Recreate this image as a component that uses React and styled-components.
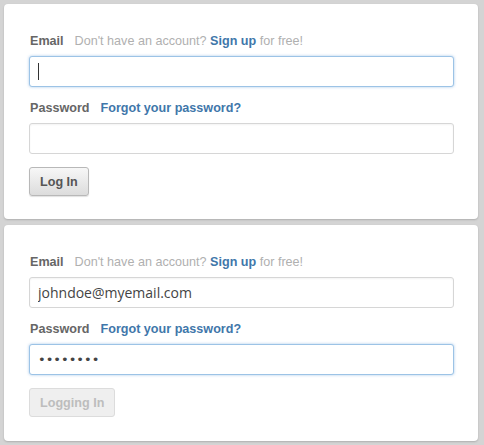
import styled, { createGlobalStyle } from "styled-components";

const Global = createGlobalStyle`
  html, body {
    margin: 0;
    padding: 0;
    background: #d4d4d4;
  }
  body {
    font-family: "Liberation Sans", Arial, sans-serif;
  }
`;

export default function App() {
  return (
    <>
      <Global />
      <Page>
        <LoginCard top={30} bottom={23}>
          <LabelRow>
            <Label>Email</Label>
            <Hint>
              Don't have an account? <Link>Sign up</Link> for free!
            </Hint>
          </LabelRow>
          <Field>
            <TextInput focused defaultValue="" />
            <Caret />
          </Field>
          <LabelRow>
            <Label>Password</Label>
            <Link>Forgot your password?</Link>
          </LabelRow>
          <Field>
            <TextInput type="password" defaultValue="" />
          </Field>
          <Button>Log In</Button>
        </LoginCard>

        <LoginCard top={30} bottom={24}>
          <LabelRow>
            <Label>Email</Label>
            <Hint>
              Don't have an account? <Link>Sign up</Link> for free!
            </Hint>
          </LabelRow>
          <Field>
            <TextInput defaultValue="johndoe@myemail.com" />
          </Field>
          <LabelRow>
            <Label>Password</Label>
            <Link>Forgot your password?</Link>
          </LabelRow>
          <Field>
            <TextInput focused type="password" defaultValue="password" />
          </Field>
          <Button disabled>Logging In</Button>
        </LoginCard>
      </Page>
    </>
  );
}

const Page = styled.div`
  width: 484px;
  height: 445px;
  padding: 4px 6px 0 4px;
  box-sizing: border-box;
  display: flex;
  flex-direction: column;
  gap: 6px;
`;

const LoginCard = styled.div`
  background: #fff;
  border-radius: 4px;
  box-shadow: 0 1px 2px rgba(0, 0, 0, 0.18);
  padding: ${(p) => p.top}px 24px ${(p) => p.bottom}px 25px;
  display: flex;
  flex-direction: column;
  align-items: flex-start;
`;

const LabelRow = styled.div`
  display: flex;
  align-items: baseline;
  gap: 11px;
  height: 15px;
  line-height: 15px;
  font-size: 12.6px;
  margin-bottom: 7px;
  padding-left: 1px;
`;

const Label = styled.span`
  font-weight: bold;
  color: #666;
`;

const Hint = styled.span`
  color: #b0b0b0;
`;

const Link = styled.span`
  font-weight: bold;
  color: #3f77aa;
`;

const Field = styled.div`
  position: relative;
  width: 100%;
  margin-bottom: 14px;
`;

const TextInput = styled.input`
  width: 100%;
  height: 31px;
  box-sizing: border-box;
  padding: 0 8px;
  border-radius: 3px;
  outline: none;
  font-family: ${(p) =>
    p.type === "password" ? '"DejaVu Sans", sans-serif' : '"Open Sans", sans-serif'};
  font-size: ${(p) => (p.type === "password" ? "13px" : "14px")};
  color: #444;
  background: #fff;
  border: 1px solid ${(p) => (p.focused ? "#9cc3e6" : "#d6d6d6")};
  box-shadow: ${(p) =>
    p.focused
      ? "0 0 3px rgba(110, 165, 220, 0.6)"
      : "inset 0 1px 2px rgba(0, 0, 0, 0.05)"};
`;

const Caret = styled.span`
  position: absolute;
  left: 9px;
  top: 7px;
  width: 1px;
  height: 17px;
  background: #333;
`;

const Button = styled.button`
  margin-top: -1px;
  height: 29px;
  padding: 0 10px;
  border-radius: 3px;
  font-family: "Liberation Sans", Arial, sans-serif;
  font-size: 12.6px;
  font-weight: bold;
  color: ${(p) => (p.disabled ? "#bdbdbd" : "#555")};
  border: 1px solid ${(p) => (p.disabled ? "#dcdcdc" : "#b8b8b8")};
  background: ${(p) =>
    p.disabled ? "#efefef" : "linear-gradient(#f7f7f7, #dcdcdc)"};
  box-shadow: ${(p) => (p.disabled ? "none" : "0 1px 1px rgba(0,0,0,0.12)")};
`;
